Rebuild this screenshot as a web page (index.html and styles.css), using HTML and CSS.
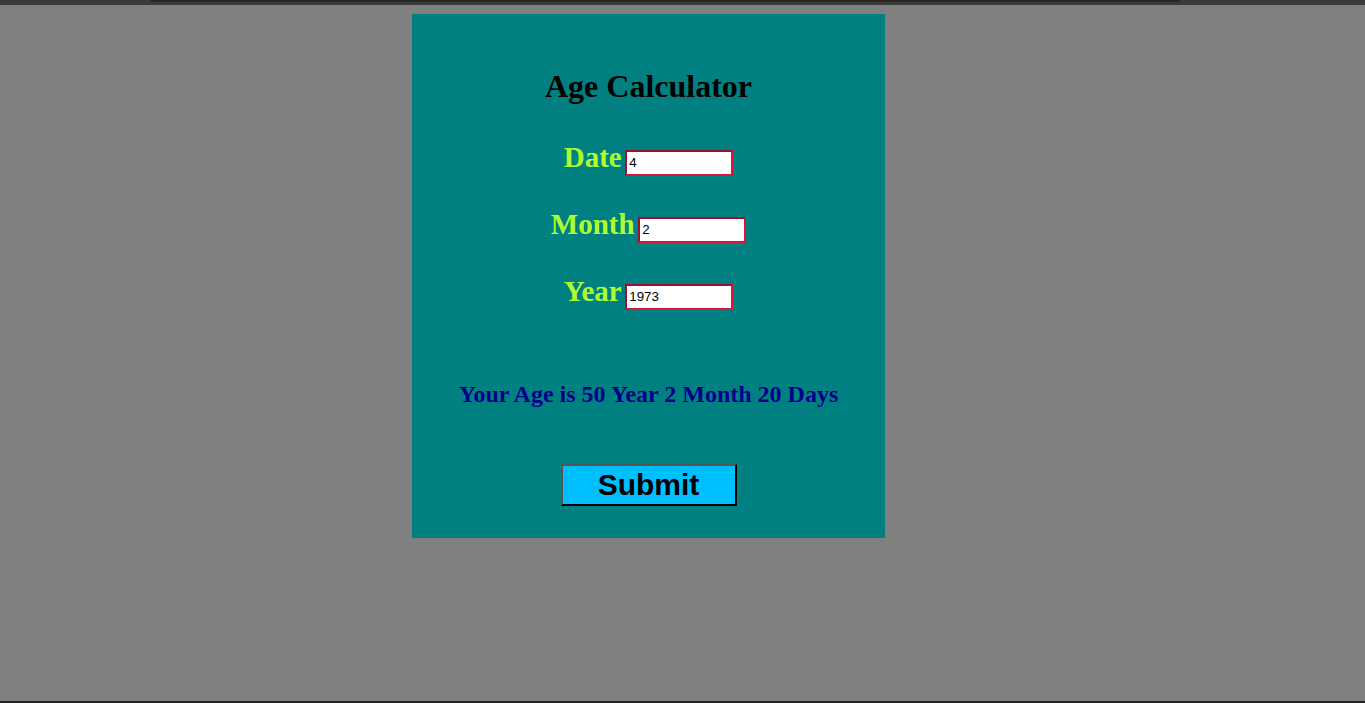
FILE: index.html
```html
<!DOCTYPE html>
<html lang="en">
<head>
<meta charset="utf-8">
<title>Age Calculator</title>
<link rel="stylesheet" href="styles.css">
</head>
<body>
<div class="topbar"><div class="topbar-line"></div></div>
<main class="page">
  <section class="card">
    <h1 class="title">Age Calculator</h1>
    <div class="field"><label class="label" for="date">Date</label><input class="input" id="date" type="text" value="4"></div>
    <div class="field"><label class="label" for="month">Month</label><input class="input" id="month" type="text" value="2"></div>
    <div class="field"><label class="label" for="year">Year</label><input class="input" id="year" type="text" value="1973"></div>
    <p class="result">Your Age is 50 Year 2 Month 20 Days</p>
    <button class="submit" type="button">Submit</button>
  </section>
</main>
<div class="bottombar"></div>
</body>
</html>
```

FILE: styles.css
```css
html, body {
  height: 100%;
}
body {
  margin: 0;
  display: flex;
  flex-direction: column;
  background: #808080;
  font-family: "Liberation Serif", "Times New Roman", serif;
}
.topbar {
  height: 5px;
  background: #3b3b3b;
  padding: 0 185px 0 150px;
}
.topbar-line {
  height: 2px;
  background: #262626;
}
.page {
  flex: 1;
  background: #808080;
}
.bottombar {
  height: 2px;
  background: #222222;
}
.card {
  width: 473px;
  box-sizing: border-box;
  margin: 9px 0 0 412px;
  padding: 54px 0 32px;
  background: #008080;
}
.title {
  margin: 0;
  font-size: 32px;
  line-height: 36px;
  font-weight: bold;
  color: #000;
  text-align: center;
}
.field {
  display: flex;
  justify-content: center;
  align-items: baseline;
  gap: 3.5px;
  margin-top: 35px;
  line-height: 36px;
}
.field + .field {
  margin-top: 30.5px;
}
.label {
  font-size: 29px;
  font-weight: bold;
  color: #adff2f;
}
.input {
  width: 100px;
  height: 20px;
  padding: 1px 2px;
  margin: 0;
  border-width: 2px;
  border-style: solid;
  border-color: #a00f30 #dc143c #dc143c #a00f30;
  background: #fff;
  color: #000;
  font-family: "Liberation Sans", Arial, sans-serif;
  font-size: 13.33px;
  line-height: normal;
}
.result {
  margin: 69.5px 0 0;
  font-size: 24px;
  line-height: 30px;
  font-weight: bold;
  color: #00008b;
  text-align: center;
}
.submit {
  display: block;
  width: 176px;
  height: 42px;
  margin: 55px auto 0;
  padding: 0;
  border-width: 2px;
  border-style: solid;
  border-color: #555 #000 #000 #555;
  background: #00bfff;
  color: #000;
  font-family: "Liberation Sans", Arial, sans-serif;
  font-size: 30px;
  font-weight: bold;
  line-height: 1;
}
```
